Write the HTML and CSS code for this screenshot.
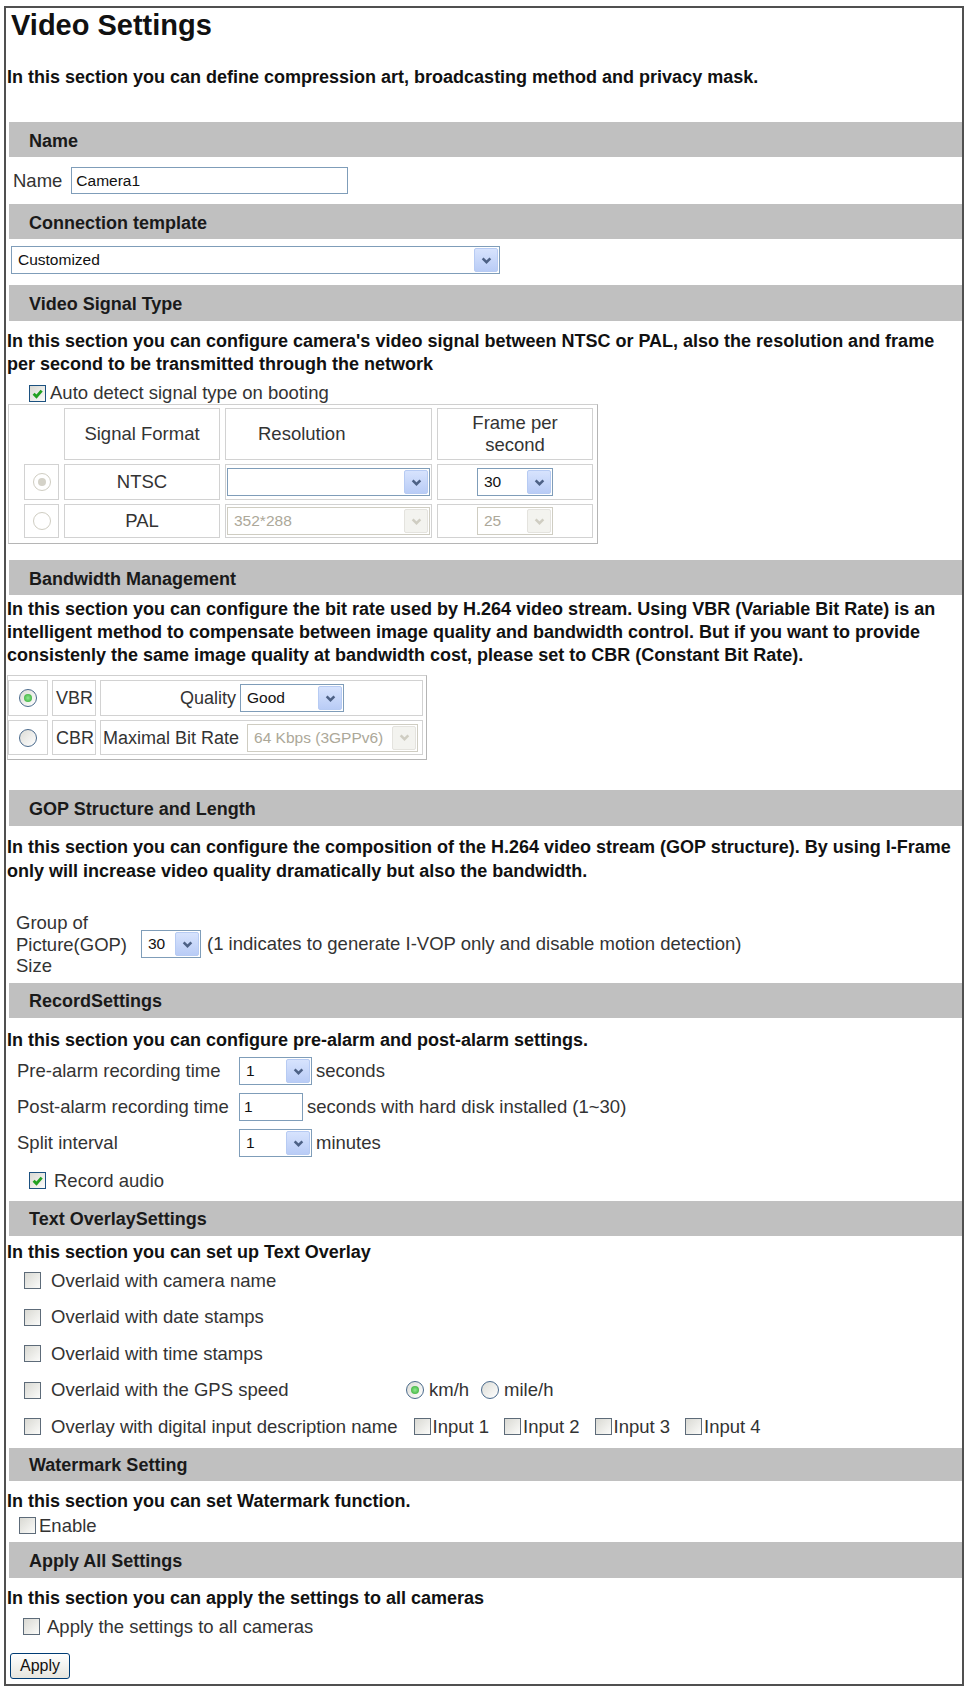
FILE: index.html
```html
<!DOCTYPE html>
<html lang="en">

<head>
  <meta charset="utf-8">
  <title>Video Settings</title>
  <link rel="stylesheet" href="styles.css">
</head>

<body>
  <div class="frame">
    <h1 class="title">Video Settings</h1>
    <p class="intro">In this section you can define compression art, broadcasting method and privacy mask.</p>

    <!-- Name -->
    <div class="bar sec-name">Name</div>
    <div class="name-row">
      <span>Name</span>
      <input class="textbox name-box" type="text" value="Camera1">
    </div>

    <!-- Connection template -->
    <div class="bar sec-conn">Connection template</div>
    <div class="select conn-select">
      <span class="select-val">Customized</span>
      <span class="select-btn"><svg viewBox="0 0 10 8"><path d="M1.5 2L5 5.5L8.5 2"/></svg></span>
    </div>

    <!-- Video signal type -->
    <div class="bar sec-signal">Video Signal Type</div>
    <p class="desc desc-signal">In this section you can configure camera's video signal between NTSC or PAL, also the resolution and frame per second to be transmitted through the network</p>
    <div class="check-row auto-row">
      <span class="cb on"><svg viewBox="0 0 10 10"><path d="M2 5.2l2.2 2.2L8.2 2.8"/></svg></span>
      <span>Auto detect signal type on booting</span>
    </div>

    <div class="sig-box">
      <div class="sig-grid">
        <div class="cell empty"></div>
        <div class="cell">Signal Format</div>
        <div class="cell res-head">Resolution</div>
        <div class="cell">Frame per second</div>

        <div class="cell"><span class="rd dim on"></span></div>
        <div class="cell">NTSC</div>
        <div class="cell">
          <div class="select res-select">
            <span class="select-val"></span>
            <span class="select-btn"><svg viewBox="0 0 10 8"><path d="M1.5 2L5 5.5L8.5 2"/></svg></span>
          </div>
        </div>
        <div class="cell">
          <div class="select fps-select">
            <span class="select-val">30</span>
            <span class="select-btn"><svg viewBox="0 0 10 8"><path d="M1.5 2L5 5.5L8.5 2"/></svg></span>
          </div>
        </div>

        <div class="cell"><span class="rd dim"></span></div>
        <div class="cell">PAL</div>
        <div class="cell">
          <div class="select res-select off">
            <span class="select-val">352*288</span>
            <span class="select-btn"><svg viewBox="0 0 10 8"><path d="M1.5 2L5 5.5L8.5 2"/></svg></span>
          </div>
        </div>
        <div class="cell">
          <div class="select fps-select off">
            <span class="select-val">25</span>
            <span class="select-btn"><svg viewBox="0 0 10 8"><path d="M1.5 2L5 5.5L8.5 2"/></svg></span>
          </div>
        </div>
      </div>
    </div>

    <!-- Bandwidth -->
    <div class="bar sec-bw">Bandwidth Management</div>
    <p class="desc desc-bw">In this section you can configure the bit rate used by H.264 video stream. Using VBR (Variable Bit Rate) is an intelligent method to compensate between image quality and bandwidth control. But if you want to provide consistenly the same image quality at bandwidth cost, please set to CBR (Constant Bit Rate).</p>

    <div class="bw-box">
      <div class="bw-grid">
        <div class="cell"><span class="rd on"></span></div>
        <div class="cell left">VBR</div>
        <div class="cell rate quality-cell">
          <span>Quality</span>
          <div class="select quality-select">
            <span class="select-val">Good</span>
            <span class="select-btn"><svg viewBox="0 0 10 8"><path d="M1.5 2L5 5.5L8.5 2"/></svg></span>
          </div>
        </div>

        <div class="cell"><span class="rd"></span></div>
        <div class="cell left">CBR</div>
        <div class="cell rate bitrate-cell">
          <span>Maximal Bit Rate</span>
          <div class="select bitrate-select off">
            <span class="select-val">64 Kbps (3GPPv6)</span>
            <span class="select-btn"><svg viewBox="0 0 10 8"><path d="M1.5 2L5 5.5L8.5 2"/></svg></span>
          </div>
        </div>
      </div>
    </div>

    <!-- GOP -->
    <div class="bar sec-gop">GOP Structure and Length</div>
    <p class="desc desc-gop">In this section you can configure the composition of the H.264 video stream (GOP structure). By using I-Frame only will increase video quality dramatically but also the bandwidth.</p>
    <div class="gop-row">
      <span class="gop-lbl">Group of Picture(GOP) Size</span>
      <div class="select gop-select">
        <span class="select-val">30</span>
        <span class="select-btn"><svg viewBox="0 0 10 8"><path d="M1.5 2L5 5.5L8.5 2"/></svg></span>
      </div>
      <span>(1 indicates to generate I-VOP only and disable motion detection)</span>
    </div>

    <!-- Record -->
    <div class="bar sec-rec">RecordSettings</div>
    <p class="desc desc-rec">In this section you can configure pre-alarm and post-alarm settings.</p>
    <div class="rec-list">
      <div class="rec-row">
        <span class="rec-lbl">Pre-alarm recording time</span>
        <div class="select small-select">
          <span class="select-val">1</span>
          <span class="select-btn"><svg viewBox="0 0 10 8"><path d="M1.5 2L5 5.5L8.5 2"/></svg></span>
        </div>
        <span>seconds</span>
      </div>
      <div class="rec-row">
        <span class="rec-lbl">Post-alarm recording time</span>
        <input class="textbox post-box" type="text" value="1">
        <span>seconds with hard disk installed (1~30)</span>
      </div>
      <div class="rec-row">
        <span class="rec-lbl">Split interval</span>
        <div class="select small-select">
          <span class="select-val">1</span>
          <span class="select-btn"><svg viewBox="0 0 10 8"><path d="M1.5 2L5 5.5L8.5 2"/></svg></span>
        </div>
        <span>minutes</span>
      </div>
    </div>
    <div class="check-row audio-row">
      <span class="cb on"><svg viewBox="0 0 10 10"><path d="M2 5.2l2.2 2.2L8.2 2.8"/></svg></span>
      <span>Record audio</span>
    </div>

    <!-- Text overlay -->
    <div class="bar sec-overlay">Text OverlaySettings</div>
    <p class="desc desc-overlay">In this section you can set up Text Overlay</p>
    <div class="overlay-list">
      <div class="overlay-row">
        <span class="cb"></span>
        <span class="overlay-lbl">Overlaid with camera name</span>
      </div>
      <div class="overlay-row">
        <span class="cb"></span>
        <span class="overlay-lbl">Overlaid with date stamps</span>
      </div>
      <div class="overlay-row">
        <span class="cb"></span>
        <span class="overlay-lbl">Overlaid with time stamps</span>
      </div>
      <div class="overlay-row">
        <span class="cb"></span>
        <span class="overlay-lbl gps-lbl">Overlaid with the GPS speed</span>
        <span class="opt"><span class="rd on"></span>km/h</span>
        <span class="opt"><span class="rd"></span>mile/h</span>
      </div>
      <div class="overlay-row">
        <span class="cb"></span>
        <span class="overlay-lbl">Overlay with digital input description name</span>
        <span class="opt input-opt first"><span class="cb"></span>Input 1</span>
        <span class="opt input-opt"><span class="cb"></span>Input 2</span>
        <span class="opt input-opt"><span class="cb"></span>Input 3</span>
        <span class="opt input-opt"><span class="cb"></span>Input 4</span>
      </div>
    </div>

    <!-- Watermark -->
    <div class="bar sec-wm">Watermark Setting</div>
    <p class="desc desc-wm">In this section you can set Watermark function.</p>
    <div class="check-row enable-row">
      <span class="cb"></span>
      <span>Enable</span>
    </div>

    <!-- Apply all -->
    <div class="bar sec-apply">Apply All Settings</div>
    <p class="desc desc-apply">In this section you can apply the settings to all cameras</p>
    <div class="check-row apply-row">
      <span class="cb"></span>
      <span>Apply the settings to all cameras</span>
    </div>
    <button class="apply-btn">Apply</button>
  </div>
</body>

</html>
```

FILE: styles.css
```css
* {
  box-sizing: border-box;
}

body {
  margin: 0;
  font-family: "Liberation Sans", Arial, sans-serif;
  font-size: 18.5px;
  color: #333;
  background-color: #fff;
}

.frame {
  margin: 6px 6px 0 4px;
  height: 1680px;
  border: 2px solid #505050;
}

.title {
  margin: 1px 0 0 5px;
  font-size: 29px;
  line-height: 32px;
  color: #111;
}

.intro,
.desc {
  margin: 0;
  padding-left: 1px;
  font-size: 18px;
  font-weight: bold;
  line-height: 24px;
  color: #111;
}

.intro {
  margin-top: 24px;
}

/* section header bars */
.bar {
  display: flex;
  align-items: center;
  height: 35px;
  margin-left: 3px;
  padding: 3px 0 0 20px;
  background-color: #c0c0c0;
  font-size: 18px;
  font-weight: bold;
  color: #1a1a1a;
}

.sec-name { margin-top: 33px; }
.sec-conn { margin-top: 10px; }
.sec-signal { margin-top: 11px; height: 36px; }
.sec-bw { margin-top: 16px; }
.sec-gop { margin-top: 30px; height: 36px; }
.sec-rec { margin-top: 6px; }
.sec-overlay { margin-top: 8px; }
.sec-wm { margin-top: 9px; height: 33px; }
.sec-apply { margin-top: 5px; height: 36px; }

.desc-signal { margin-top: 9px; line-height: 23px; }
.desc-bw { margin-top: 3px; line-height: 23px; }
.desc-gop { margin-top: 9px; }
.desc-rec { margin-top: 10px; }
.desc-overlay { margin-top: 4px; }
.desc-wm { margin-top: 8px; }
.desc-apply { margin-top: 8px; }

/* form controls */
.textbox {
  height: 27px;
  border: 1px solid #7f9db9;
  padding: 0 4px;
  font-family: "Liberation Sans", Arial, sans-serif;
  font-size: 15.5px;
  color: #111;
  outline: none;
}

.select {
  display: flex;
  height: 28px;
  border: 1px solid #7f9db9;
  background-color: #fff;
  font-size: 15.5px;
  color: #111;
}

.select-val {
  flex: 1;
  display: flex;
  align-items: center;
  padding-left: 6px;
  white-space: nowrap;
  overflow: hidden;
}

.select-btn {
  display: flex;
  align-items: center;
  justify-content: center;
  width: 24px;
  margin: 1px;
  border: 1px solid #b7cbf3;
  border-radius: 2px;
  background: linear-gradient(#d7e3fd, #b9ccf6);
}

.select-btn svg {
  width: 11px;
  height: 9px;
  fill: none;
  stroke: #4d6185;
  stroke-width: 2.3;
}

.select.off {
  border-color: #cfcdc2;
  color: #aca899;
}

.select.off .select-btn {
  border-color: #e4e3de;
  background: #f3f3ef;
}

.select.off .select-btn svg {
  stroke: #cfcdc2;
}

.cb {
  display: inline-flex;
  align-items: center;
  justify-content: center;
  flex: none;
  width: 17px;
  height: 17px;
  border: 1px solid #5d6b79;
  background: linear-gradient(135deg, #d9d9d3, #fbfbf9);
}

.cb.on {
  border-color: #1c5180;
}

.cb svg {
  width: 13px;
  height: 13px;
  fill: none;
  stroke: #21a121;
  stroke-width: 2.2;
}

.rd {
  display: inline-flex;
  align-items: center;
  justify-content: center;
  flex: none;
  width: 18px;
  height: 18px;
  border: 1px solid #4a6a8c;
  border-radius: 50%;
  background: linear-gradient(135deg, #dcdcd6, #fff);
}

.rd.on::after {
  content: "";
  width: 8px;
  height: 8px;
  border-radius: 50%;
  background: radial-gradient(#8ee88e, #2ea62e);
}

.rd.dim {
  border-color: #cfcdc2;
  background: #fff;
}

.rd.dim.on::after {
  background: #d4d2c8;
}

/* name + connection */
.name-row {
  display: flex;
  align-items: center;
  gap: 9px;
  height: 27px;
  margin: 10px 0 0 7px;
}

.name-box {
  width: 277px;
}

.conn-select {
  width: 489px;
  margin: 7px 0 0 5px;
}

/* checkbox lines */
.check-row {
  display: flex;
  align-items: center;
  height: 24px;
}

.auto-row {
  height: 22px;
  margin-top: 6px;
  padding-left: 23px;
  gap: 4px;
}

.audio-row {
  margin-top: 12px;
  padding-left: 23px;
  gap: 8px;
}

.enable-row {
  height: 22px;
  margin-top: 2px;
  padding-left: 13px;
  gap: 3px;
}

.apply-row {
  margin-top: 5px;
  padding-left: 17px;
  gap: 7px;
}

/* signal table */
.sig-box,
.bw-box {
  width: fit-content;
  border: 1px solid #cfcfcf;
  border-right-color: #b5b5b5;
  border-bottom-color: #b5b5b5;
}

.sig-box {
  margin: 0 0 0 2px;
  padding: 3px 4px 5px 15px;
}

.sig-grid {
  display: grid;
  grid-template-columns: 35px 156px 207px 156px;
  grid-template-rows: 52px 36px 34px;
  gap: 4px 5px;
}

.cell {
  display: flex;
  align-items: center;
  justify-content: center;
  border: 1px solid #d2d2d2;
  text-align: center;
  line-height: 22px;
}

.cell.empty {
  border: none;
}

.sig-grid .cell:nth-child(4) {
  padding: 0 30px;
}

.res-head {
  justify-content: flex-start;
  padding-left: 32px;
}

.res-select {
  width: 203px;
}

.fps-select {
  width: 76px;
}

/* bandwidth table */
.bw-box {
  margin: 8px 0 0 1px;
  padding: 4px 3px 4px 0;
  font-size: 18px;
}

.bw-grid {
  display: grid;
  grid-template-columns: 40px 44px 323px;
  grid-template-rows: 36px 35px;
  gap: 4px 4px;
}

.cell.left {
  justify-content: flex-start;
  padding-left: 3px;
}

.cell.rate {
  justify-content: flex-start;
  white-space: nowrap;
}

.quality-cell {
  gap: 4px;
  padding-left: 79px;
}

.bitrate-cell {
  gap: 8px;
  padding-left: 2px;
}

.quality-select {
  width: 104px;
}

.bitrate-select {
  width: 171px;
}

/* GOP */
.gop-row {
  display: flex;
  align-items: center;
  margin: 29px 0 0 10px;
}

.gop-lbl {
  width: 118px;
  line-height: 21.5px;
}

.gop-select {
  width: 60px;
  margin: 0 6px 0 7px;
}

/* record */
.rec-list {
  display: flex;
  flex-direction: column;
  gap: 9px;
  margin: 6px 0 0 11px;
}

.rec-row {
  display: flex;
  align-items: center;
  gap: 4px;
  height: 27px;
}

.rec-lbl {
  width: 218px;
}

.small-select {
  width: 73px;
}

.post-box {
  width: 64px;
  height: 28px;
}

/* overlay */
.overlay-list {
  display: flex;
  flex-direction: column;
  gap: 12.5px;
  margin-top: 5px;
  padding-left: 18px;
}

.overlay-row {
  display: flex;
  align-items: center;
  height: 24px;
}

.overlay-lbl {
  padding-left: 10px;
}

.gps-lbl {
  width: 365px;
}

.opt {
  display: flex;
  align-items: center;
  gap: 5px;
  margin-right: 12px;
}

.input-opt {
  width: 90.5px;
  margin-right: 0;
  gap: 2px;
}

.input-opt.first {
  margin-left: 16px;
}

/* apply */
.apply-btn {
  display: block;
  width: 60px;
  height: 26px;
  margin: 14px 0 0 4px;
  padding: 0;
  border: 1px solid #003c74;
  border-radius: 3px;
  background: linear-gradient(#fff, #e6e5de);
  font-family: "Liberation Sans", Arial, sans-serif;
  font-size: 16px;
  color: #111;
}
```
